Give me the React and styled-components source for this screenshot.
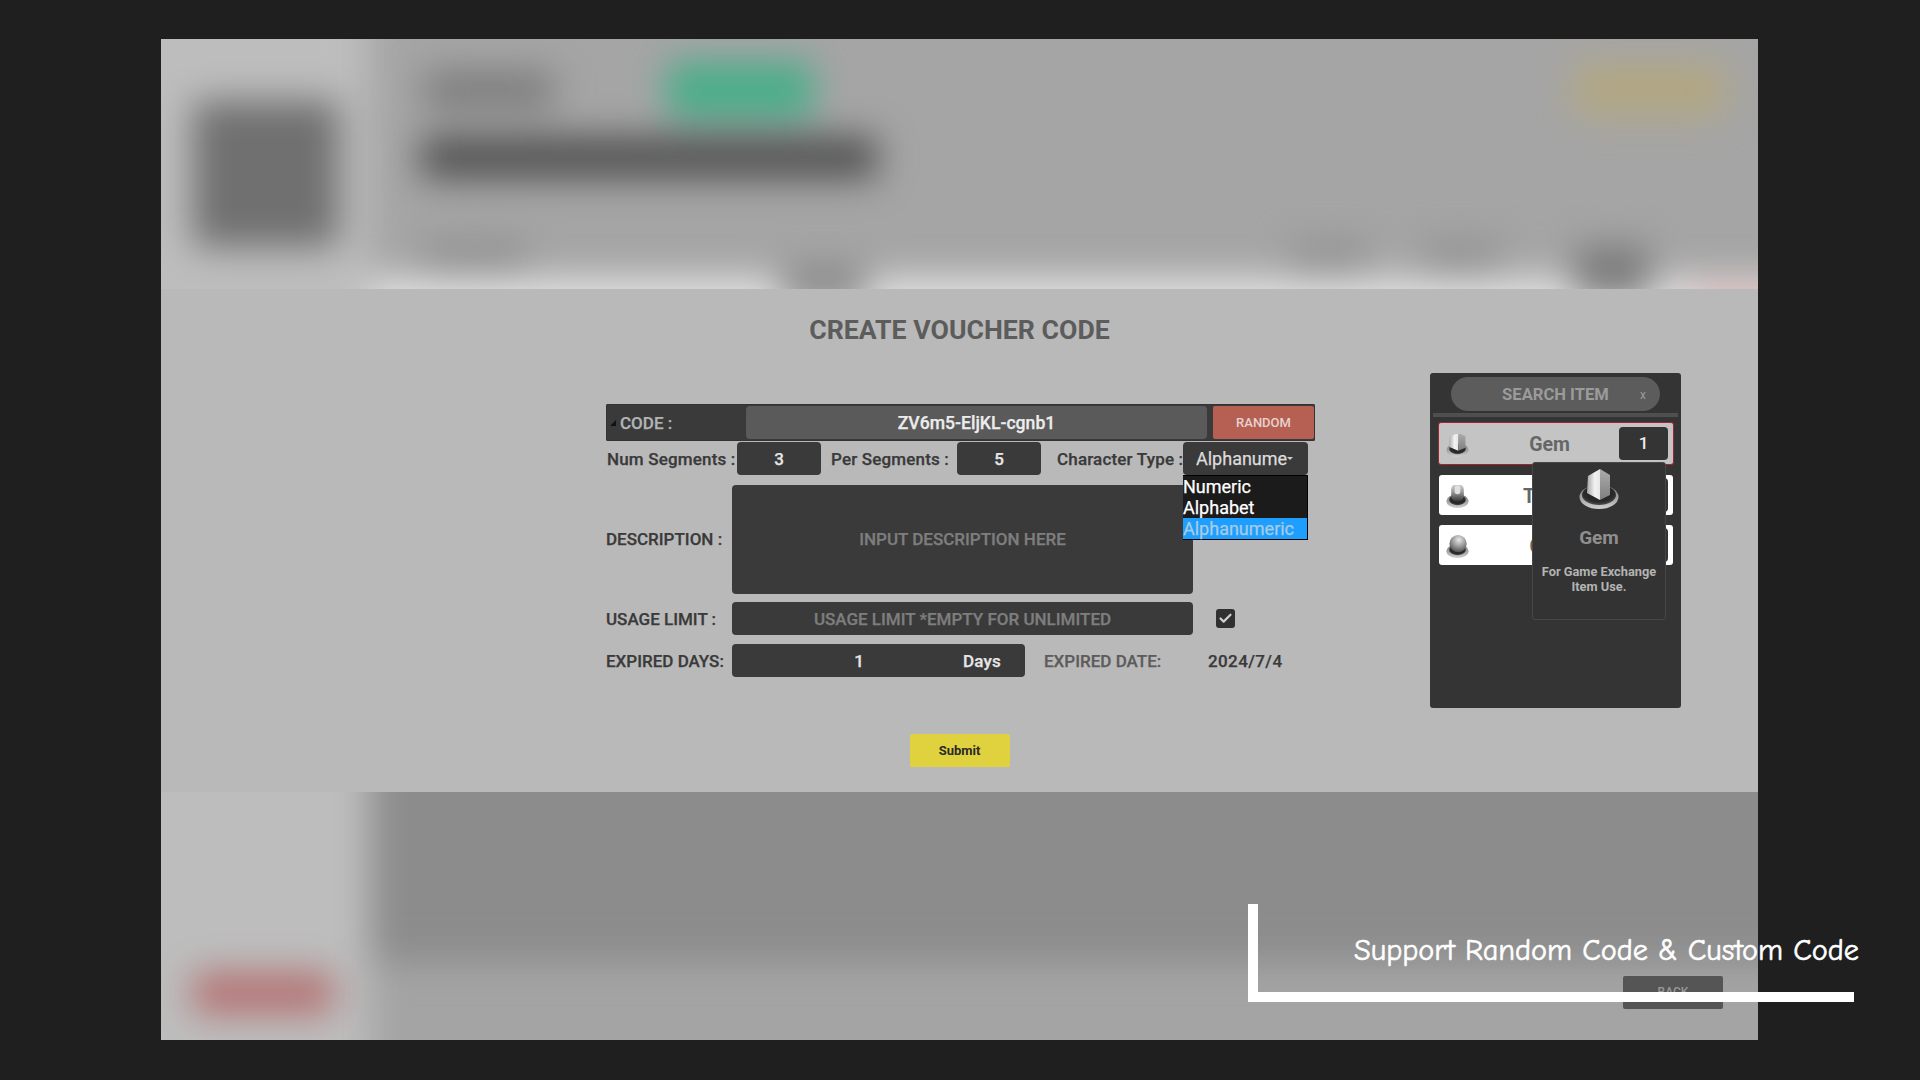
import React from 'react';
import styled, { createGlobalStyle } from 'styled-components';
import { Check as CheckIcon } from 'lucide-react';

const Global = createGlobalStyle`
  html, body { margin: 0; padding: 0; background: #1f1f1f; }
  body { width: 1920px; height: 1080px; overflow: hidden; font-family: Roboto, "Liberation Sans", sans-serif; }
  * { box-sizing: border-box; }
`;

const Stage = styled.div`
  position: relative;
  width: 1920px;
  height: 1080px;
  padding: 39px 162px 40px 161px;
`;
const Shell = styled.div`
  display: grid;
  grid-template-rows: 250px 503px 248px;
  height: 1001px;
`;
const TopBand = styled.div`
  overflow: hidden;
  background: #a5a5a5;
`;
const LowerBand = styled.div`
  display: grid;
  overflow: hidden;
  background: #a4a4a4;
`;
const BlurLayer = styled.div`
  display: flex;
  width: 1693px;
  height: ${p => p.$h}px;
  margin: -48px;
  filter: blur(18px);
  grid-area: 1 / 1;
`;
const BlurSide = styled.div`
  width: 257px;
  flex: none;
  background: #bdbdbd;
  padding: ${p => p.$top}px 0 0 80px;
`;
const SideBlock = styled.div`
  width: ${p => p.$w}px;
  height: ${p => p.$h}px;
  background: ${p => p.$c};
  border-radius: 6px;
`;
const BlurMain = styled.div`
  flex: 1;
  min-width: 0;
  display: flex;
  flex-direction: column;
  padding: 74px 0 0 55px;
`;
const BlurHeader = styled.div`
  display: flex;
  align-items: center;
  height: 50px;
  padding-right: 81px;
`;
const BlurTitle = styled.div`
  width: 128px;
  height: 36px;
  background: #7a7a7a;
`;
const BlurGreen = styled.div`
  width: 146px;
  height: 56px;
  margin-left: 114px;
  background: #48ae8a;
  border-radius: 6px;
`;
const BlurYellow = styled.div`
  width: 152px;
  height: 52px;
  margin-left: auto;
  background: #b2a781;
  border-radius: 6px;
`;
const BlurBar = styled.div`
  width: 456px;
  height: 42px;
  margin: 22px 0 0 -4px;
  background: #505050;
  border-radius: 6px;
`;
const BlurCells = styled.div`
  display: flex;
  align-items: flex-end;
  height: 100px;
  margin: 63px 0 0 -55px;
  background: linear-gradient(transparent 30%, #e4e4e4 48%);
`;
const BlurCell = styled.div`
  flex: none;
  width: ${p => p.$w}px;
  height: ${p => p.$h}px;
  margin-left: ${p => p.$l}px;
  margin-bottom: ${p => p.$b}px;
  background: ${p => p.$c};
`;
const LowerMain = styled.div`
  flex: 1;
  display: flex;
  flex-direction: column;
`;
const LowerDark = styled.div`
  height: 218px;
  background: #8c8c8c;
`;
const BackButton = styled.div`
  grid-area: 1 / 1;
  z-index: 1;
  justify-self: end;
  align-self: start;
  width: 100px;
  height: 33px;
  margin: 184px 35px 0 0;
  background: #555555;
  border-radius: 2px;
  color: #9a9a9a;
  font-size: 12px;
  font-weight: 500;
  line-height: 33px;
  text-align: center;
`;

const Modal = styled.div`
  background: #b9b9b9;
  display: flex;
  flex-direction: column;
  align-items: center;
`;
const Title = styled.h1`
  margin: 0;
  height: 56px;
  padding-top: 25px;
  font-size: 26.7px;
  line-height: 32px;
  font-weight: 700;
  color: #5c5c5c;
`;
const Columns = styled.div`
  align-self: stretch;
  display: flex;
  align-items: flex-start;
  padding: 28px 0 0 445px;
  height: 363px;
  flex: none;
`;
const Form = styled.div`
  position: relative;
  width: 709px;
  margin: 31px 115px 0 0;
  display: flex;
  flex-direction: column;
  font-size: 17px;
  font-weight: 500;
  color: #3a3a3a;
  -webkit-text-stroke: 0.25px currentColor;
`;
const CodeRow = styled.div`
  display: flex;
  align-items: center;
  height: 37px;
  padding: 2px 1px;
  background: #3a3a3a;
  border-radius: 2px;
  box-shadow: inset 0 0 0 1px #333;
`;
const Tri = styled.span`
  width: 0;
  height: 0;
  margin: 0 4px 0 3px;
  border-left: 6px solid transparent;
  border-bottom: 6px solid #111;
`;
const CodeLabel = styled.span`
  width: 126px;
  color: #b4b4b4;
  font-size: 17px;
`;
const CodeValue = styled.div`
  width: 461px;
  height: 33px;
  background: #5a5a5a;
  border-radius: 4px;
  color: #ececec;
  text-align: center;
  line-height: 34px;
  font-size: 17.6px;
`;
const RandomButton = styled.div`
  width: 101px;
  height: 33px;
  margin-left: 6px;
  background: #b56053;
  border-radius: 2px;
  color: #e6d2ce;
  font-size: 13px;
  text-align: center;
  line-height: 33px;
  -webkit-text-stroke: 0;
`;
const SegRow = styled.div`
  display: flex;
  align-items: center;
  height: 33px;
  margin-top: 1px;
  padding-left: 1px;
`;
const Label = styled.span`
  flex: none;
  width: ${p => p.$w}px;
  margin-left: ${p => p.$l || 0}px;
  padding-bottom: ${p => p.$pb || 0}px;
  letter-spacing: ${p => p.$ls || 0}px;
  white-space: nowrap;
  color: ${p => p.$c || '#3a3a3a'};
`;
const SegLabel = styled(Label)`
  letter-spacing: 0.17px;
`;
const Field = styled.div`
  flex: none;
  display: flex;
  align-items: center;
  justify-content: center;
  width: ${p => p.$w}px;
  height: ${p => p.$h || 33}px;
  padding-bottom: ${p => p.$pb || 0}px;
  background: #3a3a3a;
  border-radius: 4px;
  color: ${p => (p.$muted ? '#7e7e7e' : '#e6e6e6')};
  font-size: 17px;
`;
const DaysValue = styled.span`
  width: 252px;
  text-align: center;
`;
const DaysUnit = styled.span`
  width: 41px;
  margin: 0 20px 0 -22px;
  flex: none;
  letter-spacing: 0.2px;
`;
const Select = styled.div`
  position: relative;
  flex: none;
  width: 125px;
  height: 33px;
  background: #3a3a3a;
  border-radius: 4px;
  padding-left: 13px;
  color: #dcdcdc;
  font-size: 18px;
  font-weight: 400;
  line-height: 33px;
`;
const SelectText = styled.div`
  width: 91px;
  overflow: hidden;
  white-space: nowrap;
`;
const Caret = styled.span`
  position: absolute;
  left: 104px;
  top: 15px;
  border-left: 3px solid transparent;
  border-right: 3px solid transparent;
  border-top: 3px solid #cfcfcf;
`;
const Options = styled.div`
  position: absolute;
  top: 33px;
  left: 0;
  width: 125px;
  height: 65px;
  z-index: 2;
  background: #1b1b1b;
  border: 1px solid #000;
  border-left: 0;
  display: flex;
  flex-direction: column;
`;
const Option = styled.div`
  height: 21px;
  line-height: 21px;
  font-size: 18px;
  font-weight: 400;
  color: ${p => (p.$active ? '#a8cbe4' : '#ffffff')};
  background: ${p => (p.$active ? '#1e9fff' : 'transparent')};
`;
const LineRow = styled.div`
  display: flex;
  align-items: center;
  margin-top: ${p => p.$mt}px;
`;
const CheckBox = styled.span`
  display: flex;
  align-items: center;
  justify-content: center;
  width: 19px;
  height: 19px;
  margin-left: 23px;
  background: #303030;
  border-radius: 3px;
  color: #cfcfcf;
  -webkit-text-stroke: 0;
`;
const Panel = styled.div`
  width: 251px;
  height: 335px;
  flex: none;
  position: relative;
  background: #343434;
  border-radius: 3px;
  padding: 4px 3px 0;
`;
const SearchPill = styled.div`
  position: relative;
  width: 209px;
  height: 34px;
  margin-left: 18px;
  background: #5c5c5c;
  border-radius: 17px;
  color: #9b9b9b;
  font-size: 16.6px;
  font-weight: 700;
  line-height: 36px;
  text-align: center;
`;
const Clear = styled.span`
  position: absolute;
  right: 14px;
  top: 0;
  font-size: 12px;
  font-weight: 400;
`;
const Divider = styled.div`
  height: 4px;
  margin-top: 2px;
  background: #4f4f4f;
`;
const ItemList = styled.div`
  display: flex;
  flex-direction: column;
  gap: 10px;
  margin: 5px 4px 0 5px;
`;
const Item = styled.div`
  position: relative;
  display: flex;
  align-items: center;
  height: ${p => (p.$selected ? 43 : 40)}px;
  margin: ${p => (p.$selected ? '0' : '0 1px')};
  padding: 0 5px 0 7px;
  background: ${p => (p.$selected ? '#c4c4c4' : '#ffffff')};
  border: ${p => (p.$selected ? '1px solid #a3232f' : 'none')};
  border-radius: 3px;
`;
const ItemName = styled.span`
  flex: 1;
  padding: 2px 0 0 11px;
  text-align: center;
  color: #666;
  font-size: 19.5px;
  font-weight: 700;
`;
const Qty = styled.div`
  width: 49px;
  height: ${p => p.$h}px;
  background: #343434;
  border-radius: 4px;
  color: #eee;
  font-size: 17px;
  font-weight: 500;
  text-align: center;
  line-height: ${p => p.$h}px;
`;
const Tooltip = styled.div`
  position: absolute;
  left: 102px;
  top: 89px;
  z-index: 3;
  width: 134px;
  height: 158px;
  background: #333;
  border: 1px solid #474747;
  border-radius: 3px;
  display: flex;
  flex-direction: column;
  align-items: center;
  padding-top: 6px;
`;
const TipName = styled.div`
  margin-top: 18px;
  color: #8f8f8f;
  font-size: 19px;
  font-weight: 700;
  line-height: 22px;
`;
const TipText = styled.div`
  margin-top: 15px;
  width: 128px;
  color: #b4b4b4;
  font-size: 12.8px;
  font-weight: 700;
  line-height: 15px;
  text-align: center;
`;
const Submit = styled.div`
  width: 100px;
  height: 33px;
  margin-top: 26px;
  background: #e0d23e;
  border-radius: 2px;
  color: #2a2a2a;
  font-size: 13px;
  font-weight: 700;
  text-align: center;
  line-height: 34px;
`;
const CalloutFrame = styled.div`
  position: absolute;
  left: 1248px;
  top: 904px;
  width: 606px;
  height: 98px;
  border-left: 10px solid #fff;
  border-bottom: 10px solid #fff;
  z-index: 5;
`;
const CalloutText = styled.div`
  position: absolute;
  left: 1354px;
  top: 932px;
  z-index: 5;
  color: #fff;
  font-family: "Comic Sans MS", "Comic Neue", cursive;
  font-size: 30.25px;
  line-height: 38px;
  white-space: nowrap;
  -webkit-text-stroke: 0.6px #fff;
`;
const IconSvg = styled.svg`
  flex: none;
  margin-top: ${p => (p.$small ? 3 : 0)}px;
`;

function Pedestal({ size, kind, id, small }) {
  return (
    <IconSvg $small={small} width={size} height={size} viewBox="0 0 40 40">
      <defs>
        <linearGradient id={`${id}ring`} x1="0" y1="0" x2="0" y2="1">
          <stop offset="0" stopColor="#777" />
          <stop offset="0.55" stopColor="#a5a5a5" />
          <stop offset="1" stopColor="#d0d0d0" />
        </linearGradient>
        <radialGradient id={`${id}well`} cx="0.5" cy="0.4" r="0.6">
          <stop offset="0" stopColor="#1c1c1c" />
          <stop offset="0.75" stopColor="#2b2b2b" />
          <stop offset="1" stopColor="#4e4e4e" />
        </radialGradient>
        <linearGradient id={`${id}l`} x1="0" y1="0" x2="1" y2="0">
          <stop offset="0" stopColor="#a8a8a8" />
          <stop offset="0.6" stopColor="#f2f2f2" />
          <stop offset="1" stopColor="#e6e6e6" />
        </linearGradient>
        <linearGradient id={`${id}r`} x1="0" y1="0" x2="0" y2="1">
          <stop offset="0" stopColor="#adadad" />
          <stop offset="1" stopColor="#7e7e7e" />
        </linearGradient>
        <linearGradient id={`${id}c`} x1="0" y1="0" x2="0" y2="1">
          <stop offset="0" stopColor="#d8d8d8" />
          <stop offset="0.45" stopColor="#9a9a9a" />
          <stop offset="1" stopColor="#333" />
        </linearGradient>
        <radialGradient id={`${id}s`} cx="0.55" cy="0.28" r="0.8">
          <stop offset="0" stopColor="#e8e8e8" />
          <stop offset="0.5" stopColor="#979797" />
          <stop offset="1" stopColor="#3e3e3e" />
        </radialGradient>
      </defs>
      <ellipse cx="20" cy="28" rx="19.5" ry="12" fill={`url(#${id}ring)`} />
      <ellipse cx="20" cy="26" rx={small ? 14.5 : 17} ry={small ? 9 : 10} fill={`url(#${id}well)`} />
      {kind === 'gem' && (
        <g transform={small ? 'translate(-5 -2) scale(1.25 1)' : undefined}>
          <polygon points="21,0 9,7 8,24 21,31" fill={`url(#${id}l)`} />
          <polygon points="21,0 31,6 31,26 21,31" fill={`url(#${id}r)`} />
        </g>
      )}
      {kind === 'capsule' && (
        <>
          <rect x="9" y="-2" width="22" height="31" rx="10" fill={`url(#${id}c)`} />
          <rect x="15" y="1" width="10" height="15" rx="5" fill="#e0e0e0" />
        </>
      )}
      {kind === 'sphere' && <circle cx="21" cy="15" r="15" fill={`url(#${id}s)`} />}
    </IconSvg>
  );
}

export default function App() {
  return (
    <>
      <Global />
      <Stage>
        <Shell>
          <TopBand>
            <BlurLayer $h={346}>
              <BlurSide $top={110}><SideBlock $w={146} $h={146} $c="#707070" /></BlurSide>
              <BlurMain>
                <BlurHeader>
                  <BlurTitle />
                  <BlurGreen />
                  <BlurYellow />
                </BlurHeader>
                <BlurBar />
                <BlurCells>
                  <BlurCell $l={55} $w={100} $h={30} $b={65} $c="#8e8e8e" />
                  <BlurCell $l={257} $w={84} $h={40} $b={30} $c="#8a8a8a" />
                  <BlurCell $l={425} $w={76} $h={32} $b={62} $c="#909090" />
                  <BlurCell $l={56} $w={77} $h={32} $b={62} $c="#909090" />
                  <BlurCell $l={75} $w={75} $h={52} $b={38} $c="#7a7a7a" />
                  <BlurCell $l={40} $w={116} $h={50} $b={0} $c="#e4c4c4" />
                </BlurCells>
              </BlurMain>
            </BlurLayer>
          </TopBand>
          <Modal>
            <Title>CREATE VOUCHER CODE</Title>
            <Columns>
              <Form>
                <CodeRow>
                  <Tri />
                  <CodeLabel>CODE :</CodeLabel>
                  <CodeValue>ZV6m5-EljKL-cgnb1</CodeValue>
                  <RandomButton>RANDOM</RandomButton>
                </CodeRow>
                <SegRow>
                  <SegLabel $w={130}>Num Segments :</SegLabel>
                  <Field $w={84}>3</Field>
                  <SegLabel $w={126} $l={10}>Per Segments :</SegLabel>
                  <Field $w={84}>5</Field>
                  <SegLabel $w={126} $l={16}>Character Type :</SegLabel>
                  <Select>
                    <SelectText>Alphanumeric</SelectText>
                    <Caret />
                    <Options>
                      <Option>Numeric</Option>
                      <Option>Alphabet</Option>
                      <Option $active>Alphanumeric</Option>
                    </Options>
                  </Select>
                </SegRow>
                <LineRow $mt={10}>
                  <Label $w={126} $pb={2}>DESCRIPTION :</Label>
                  <Field $w={461} $h={109} $pb={2} $muted>INPUT DESCRIPTION HERE</Field>
                </LineRow>
                <LineRow $mt={8}>
                  <Label $w={126}>USAGE LIMIT :</Label>
                  <Field $w={461} $muted>USAGE LIMIT *EMPTY FOR UNLIMITED</Field>
                  <CheckBox><CheckIcon size={15} strokeWidth={3.5} /></CheckBox>
                </LineRow>
                <LineRow $mt={9}>
                  <Label $w={126}>EXPIRED DAYS:</Label>
                  <Field $w={293}>
                    <DaysValue>1</DaysValue>
                    <DaysUnit>Days</DaysUnit>
                  </Field>
                  <Label $w={164} $l={19} $c="#5c5c5c">EXPIRED DATE:</Label>
                  <Label $w={80} $ls={0.4}>2024/7/4</Label>
                </LineRow>
              </Form>
              <Panel>
                <SearchPill>SEARCH ITEM<Clear>x</Clear></SearchPill>
                <Divider />
                <ItemList>
                  <Item $selected>
                    <Pedestal small size={23} kind="gem" id="a" />
                    <ItemName>Gem</ItemName>
                    <Qty $h={33}>1</Qty>
                  </Item>
                  <Item>
                    <Pedestal small size={23} kind="capsule" id="b" />
                    <ItemName>Token</ItemName>
                    <Qty $h={34}>1</Qty>
                  </Item>
                  <Item>
                    <Pedestal small size={23} kind="sphere" id="c" />
                    <ItemName>Coin</ItemName>
                    <Qty $h={34}>1</Qty>
                  </Item>
                </ItemList>
                <Tooltip>
                  <Pedestal size={40} kind="gem" id="d" />
                  <TipName>Gem</TipName>
                  <TipText>For Game Exchange Item Use.</TipText>
                </Tooltip>
              </Panel>
            </Columns>
            <Submit>Submit</Submit>
          </Modal>
          <LowerBand>
            <BlurLayer $h={344}>
              <BlurSide $top={229}><SideBlock $w={140} $h={40} $c="#b47070" /></BlurSide>
              <LowerMain><LowerDark /></LowerMain>
            </BlurLayer>
            <BackButton>BACK</BackButton>
          </LowerBand>
        </Shell>
        <CalloutFrame />
        <CalloutText>Support Random Code &amp; Custom Code</CalloutText>
      </Stage>
    </>
  );
}
